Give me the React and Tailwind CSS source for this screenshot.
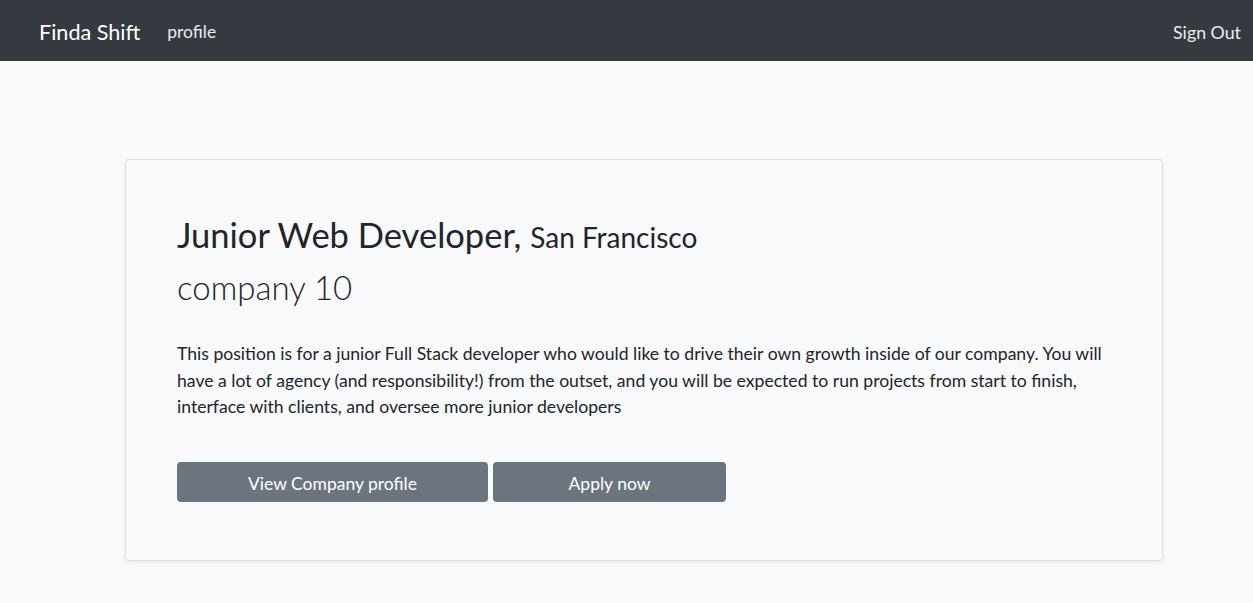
import React from "react";

const Navbar = () => (
  <nav className="h-[61px] bg-[#343a40] flex items-center justify-between pl-[39px] pr-[12px] pt-[4px]">
    <div className="flex items-center">
      <a className="text-[21.6px] text-white mr-[27px]">Finda Shift</a>
      <a className="text-[17.5px] text-white/90">profile</a>
    </div>
    <a className="text-[17.8px] text-white/90">Sign Out</a>
  </nav>
);

const JobCard = () => (
  <div className="w-[1038px] ml-[125px] bg-[#f8f9fa] border border-[#e0e1e2] rounded-[4px] shadow-[0_1px_3px_rgba(0,0,0,0.08)] px-[51px] pt-[50px] pb-[58px]">
    <h1 className="text-[34.5px] leading-[50px] text-[#212529]">
      Junior Web Developer, <span className="text-[28px]">San Francisco</span>
    </h1>
    <h2 className="text-[33px] leading-[50px] font-light text-[#212529]">company 10</h2>
    <p className="mt-[29px] text-[17.6px] leading-[26.5px] text-[#212529] w-[935px]">
      This position is for a junior Full Stack developer who would like to drive their own growth inside of our company. You will have a lot of agency (and responsibility!) from the outset, and you will be expected to run projects from start to finish, interface with clients, and oversee more junior developers
    </p>
    <div className="flex gap-[5px] mt-[41px]">
      <button className="w-[311px] h-[40px] pt-[5px] bg-[#6c757d] text-white text-[17.5px] rounded-[4px]">View Company profile</button>
      <button className="w-[233px] h-[40px] pt-[5px] bg-[#6c757d] text-white text-[17.5px] rounded-[4px]">Apply now</button>
    </div>
  </div>
);

export default function App() {
  return (
    <div className="min-h-[603px] bg-[#f8f9fa] font-['Lato',sans-serif]">
      <Navbar />
      <main className="pt-[98px]">
        <JobCard />
      </main>
    </div>
  );
}
